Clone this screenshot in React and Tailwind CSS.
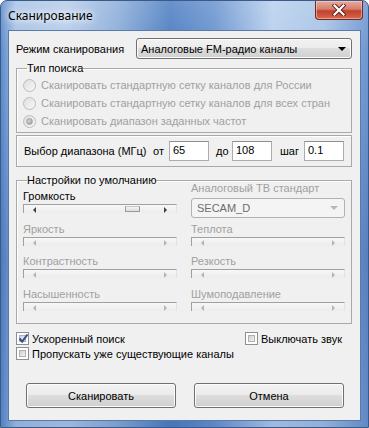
import React from 'react'

const font = "font-['Liberation_Sans',Arial,sans-serif] text-[11px] leading-[14px] whitespace-nowrap"

function Slider({ thumb, disabled }) {
  return (
    <div className="relative h-[9px] border-t border-l border-[#a0a0a0] border-r border-r-[#e3e3e3] bg-[linear-gradient(#f7f7f7,#ececec)]">
      <span className={`absolute left-[9px] top-[2px] w-0 h-0 border-y-[3px] border-y-transparent border-r-[3px] ${disabled ? 'border-r-[#b4b4b4]' : 'border-r-[#404040]'}`} />
      <span className={`absolute right-[9px] top-[2px] w-0 h-0 border-y-[3px] border-y-transparent border-l-[3px] ${disabled ? 'border-l-[#b4b4b4]' : 'border-l-[#404040]'}`} />
      {thumb != null && (
        <span className="absolute top-[1px] h-[6px] w-[15px] border border-[#9a9a9a] border-t-[#c8c8c8] bg-[linear-gradient(#f4f4f4,#dcdcdc)]" style={{ left: thumb }} />
      )}
    </div>
  )
}

function Radio({ checked, label }) {
  return (
    <div className="flex items-center h-[18px]">
      <span className="w-[13px] h-[13px] rounded-full border border-[#bcbcbc] bg-[linear-gradient(135deg,#dedede,#f8f8f8)] flex items-center justify-center">
        {checked && <span className="w-[7px] h-[7px] rounded-full bg-[radial-gradient(circle_at_40%_40%,#d8d8d8,#8f8f8f)] border border-[#a8a8a8]" />}
      </span>
      <span className="ml-[5px] text-[#a0a0a0]">{label}</span>
    </div>
  )
}

function Checkbox({ checked, label }) {
  return (
    <div className="flex items-center h-[15px]">
      <span className="relative w-[13px] h-[13px] border border-[#8e8f8f] bg-white p-[2px] flex">
        <span className="flex-1 border border-[#b0b0b0] bg-[linear-gradient(135deg,#cfcfcf,#f4f4f4)]" />
        {checked && (
          <svg className="absolute left-[1px] top-[0px]" width="11" height="11" viewBox="0 0 11 11">
            <path d="M1.5 5.5 L4.2 8.6 L9.5 1.5" fill="none" stroke="#2b4f96" strokeWidth="2" />
          </svg>
        )}
      </span>
      <span className="ml-[3px] text-black">{label}</span>
    </div>
  )
}

function Field({ value }) {
  return (
    <div className="w-[40px] h-[20px] border border-[#abadb3] border-t-[#8a8f99] bg-white pl-[3px] pt-[1px] text-black">
      {value}
    </div>
  )
}

function Button({ children }) {
  return (
    <div className="w-[150px] h-[25px] rounded-[3px] border border-[#707070] bg-[linear-gradient(#f2f2f2_0%,#ebebeb_49%,#dddddd_50%,#cfcfcf_100%)] shadow-[inset_0_0_0_1px_#fcfcfc] flex items-center justify-center text-black">
      {children}
    </div>
  )
}

function Group({ legend, children, className = '' }) {
  return (
    <fieldset className={`border border-[#a9a9a9] shadow-[inset_1px_1px_0_#fff] ${className}`}>
      {legend && <legend className="ml-[4px] px-0 text-black leading-[14px]">{legend}</legend>}
      {children}
    </fieldset>
  )
}

export default function App() {
  return (
    <div className={`w-[369px] h-[428px] rounded-t-[7px] border border-[#3a5a88] bg-[linear-gradient(180deg,rgba(255,255,255,0.15)_0%,rgba(255,255,255,0)_12%,rgba(20,60,140,0.25)_60%,rgba(20,60,140,0.15)_100%),linear-gradient(90deg,#5f8dcc_0%,#a9c3e6_4%,#b7cdea_18%,#8cadd9_32%,#4f7fc2_46%,#6a94cf_58%,#b9d0ee_74%,#a8c3e6_88%,#6f97d0_100%)] flex flex-col ${font} select-none`}>
      <div className="h-[29px] flex items-start">
        <div className="ml-[7px] mt-[7px] text-black font-['Noto_Sans',sans-serif] text-[12px] leading-[16px] [text-shadow:0_0_6px_#fff,0_0_10px_#fff]">
          Сканирование
        </div>
        <div className="ml-auto mr-[5px] w-[48px] h-[19px] rounded-b-[4px] border border-t-0 border-[#6b2a22] bg-[linear-gradient(#e9aa9c_0%,#d47e6e_45%,#c0402c_55%,#d86a4e_100%)] shadow-[inset_0_0_0_1px_rgba(255,220,210,0.5)] flex items-center justify-center">
          <svg width="14" height="12" viewBox="0 0 14 12">
            <path d="M2.5 1.5 L11.5 10.5 M11.5 1.5 L2.5 10.5" stroke="#5a1e16" strokeWidth="4" strokeLinecap="square" />
            <path d="M2.5 1.5 L11.5 10.5 M11.5 1.5 L2.5 10.5" stroke="#fff" strokeWidth="2.2" strokeLinecap="square" />
          </svg>
        </div>
      </div>

      <div className="mx-[7px] h-[391px] border border-[#5a7aa8] bg-[#f0f0f0] pl-[7px] pr-[8px] flex flex-col">
        <div className="mt-[7px] flex items-center h-[21px]">
          <div className="w-[120px] text-black">Режим сканирования</div>
          <div className="flex-1 h-[21px] rounded-[3px] border border-[#707070] bg-[linear-gradient(#f2f2f2_0%,#ebebeb_49%,#dddddd_50%,#cfcfcf_100%)] shadow-[inset_0_0_0_1px_#fcfcfc] flex items-center pl-[4px] pr-[5px] text-black">
            <span className="flex-1">Аналоговые FM-радио каналы</span>
            <span className="w-0 h-0 border-x-[4px] border-x-transparent border-t-[4px] border-t-black" />
          </div>
        </div>

        <Group legend="Тип поиска" className="mt-[2px] pl-[6px] pt-[1px] pb-[2px]">
          <Radio label="Сканировать стандартную сетку каналов для России" />
          <Radio label="Сканировать стандартную сетку каналов для всех стран" />
          <Radio checked label="Сканировать диапазон заданных частот" />
        </Group>

        <Group className="mt-[2px] h-[32px] pl-[7px]">
          <div className="h-[30px] flex items-center text-black">
            <span className="w-[129px]">Выбор диапазона (МГц)</span>
            <span className="w-[16px]">от</span>
            <Field value="65" />
            <span className="ml-[7px] w-[16px]">до</span>
            <Field value="108" />
            <span className="ml-[8px] w-[24px]">шаг</span>
            <Field value="0.1" />
          </div>
        </Group>

        <Group legend="Настройки по умолчанию" className="mt-[6px] px-[6px] pb-[12px]">
          <div className="flex gap-[14px] items-start">
            <div className="w-[154px] pt-[2px] flex flex-col">
              <div className="h-[14px] text-black">Громкость</div>
              <div className="mt-[1px]"><Slider thumb={101} /></div>
              <div className="mt-[9px] h-[14px] text-[#a0a0a0]">Яркость</div>
              <div className="mt-[1px]"><Slider disabled /></div>
              <div className="mt-[8px] h-[14px] text-[#a0a0a0]">Контрастность</div>
              <div className="mt-[1px]"><Slider disabled /></div>
              <div className="mt-[9px] h-[14px] text-[#a0a0a0]">Насышенность</div>
              <div className="mt-[1px]"><Slider disabled /></div>
            </div>
            <div className="w-[154px] -mt-[6px] flex flex-col">
              <div className="h-[14px] text-[#a0a0a0]">Аналоговый ТВ стандарт</div>
              <div className="mt-[3px] h-[20px] rounded-[3px] border border-[#adb2b5] bg-[#f4f4f4] flex items-center pl-[5px] pr-[6px]">
                <span className="flex-1 text-[#6d6d6d]">SECAM_D</span>
                <span className="w-0 h-0 border-x-[4px] border-x-transparent border-t-[4px] border-t-[#b8b8b8]" />
              </div>
              <div className="mt-[4px] h-[14px] text-[#a0a0a0]">Теплота</div>
              <div className="mt-[1px]"><Slider disabled /></div>
              <div className="mt-[8px] h-[14px] text-[#a0a0a0]">Резкость</div>
              <div className="mt-[1px]"><Slider disabled /></div>
              <div className="mt-[9px] h-[14px] text-[#a0a0a0]">Шумоподавление</div>
              <div className="mt-[1px]"><Slider disabled /></div>
            </div>
          </div>
        </Group>

        <div className="mt-[7px] flex">
          <div className="w-[229px]"><Checkbox checked label="Ускоренный поиск" /></div>
          <Checkbox label="Выключать звук" />
        </div>
        <Checkbox label="Пропускать уже существующие каналы" />

        <div className="mt-[22px] ml-[10px] flex gap-[18px]">
          <Button>Сканировать</Button>
          <Button>Отмена</Button>
        </div>
      </div>
    </div>
  )
}
